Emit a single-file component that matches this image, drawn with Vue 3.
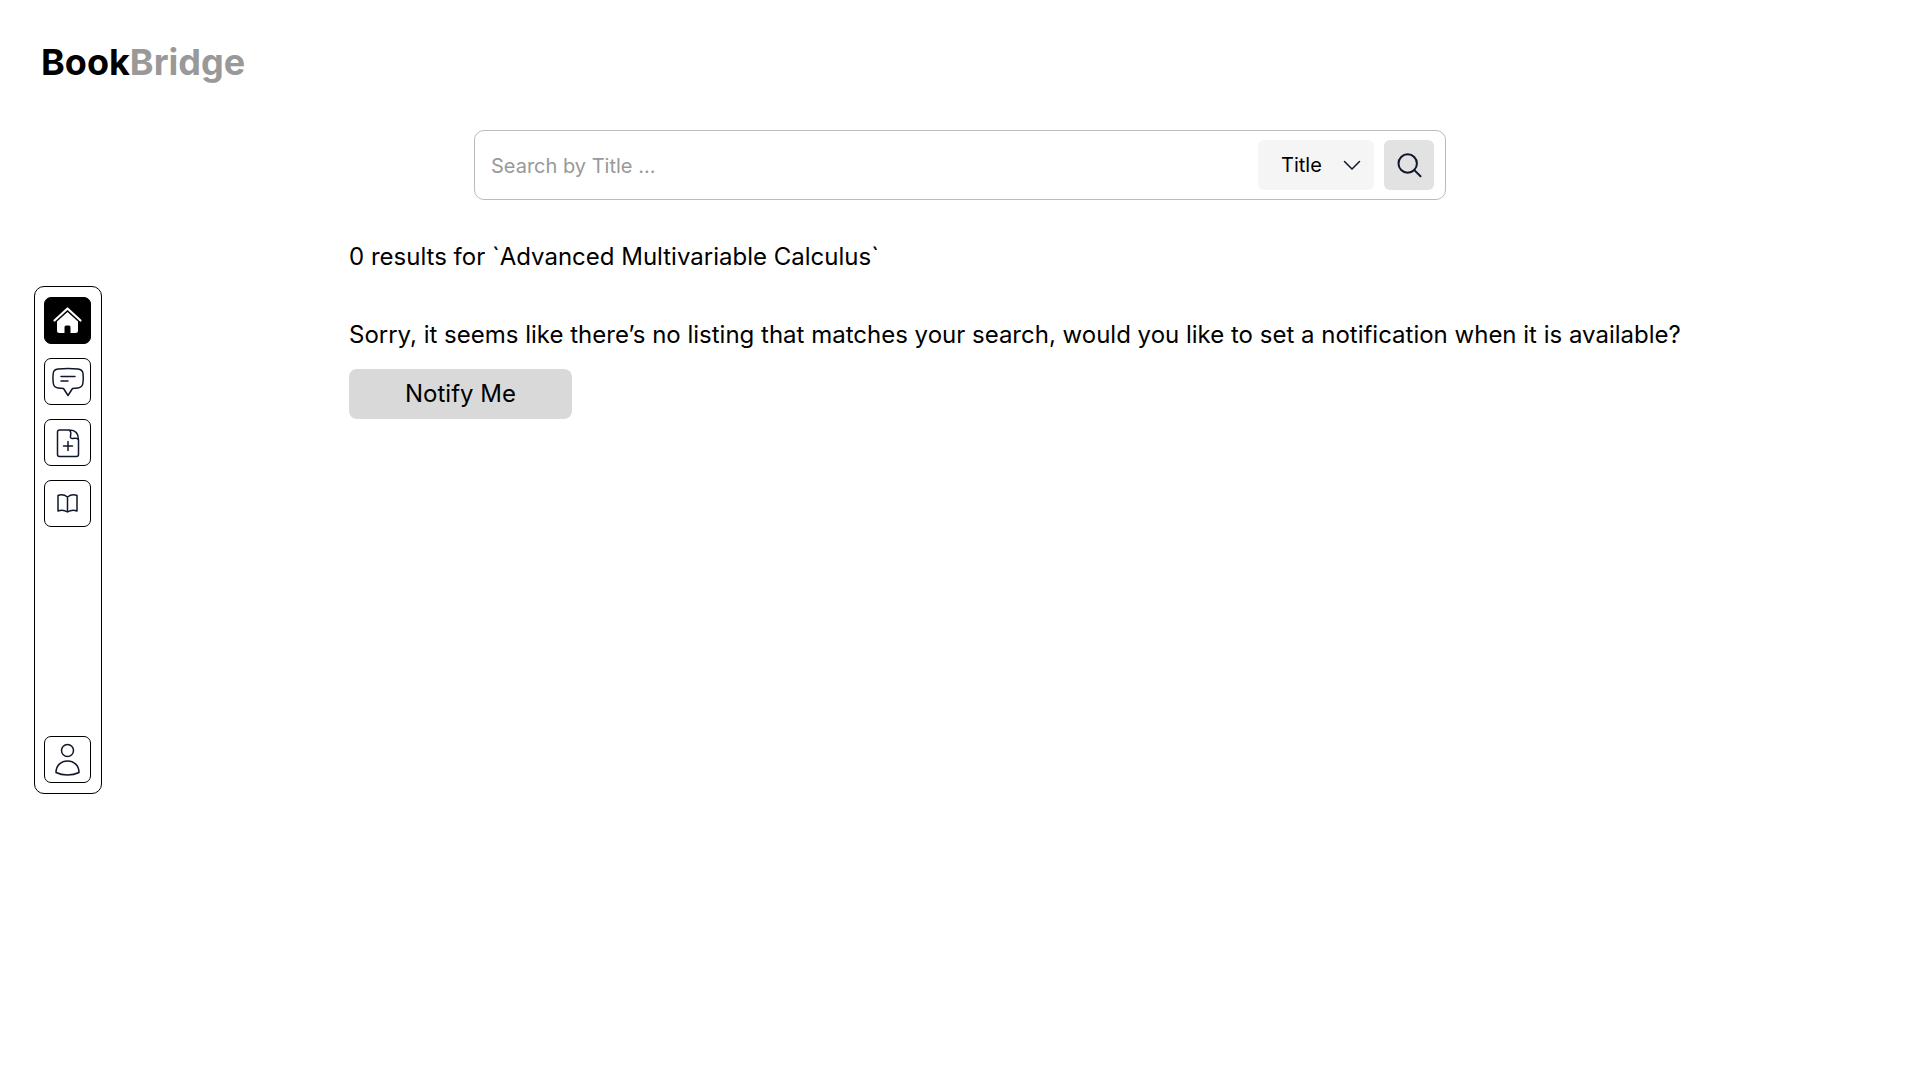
<script setup>
import { ref } from 'vue'

const query = ref('')
const field = ref('Title')
const fields = ['Title', 'Author', 'ISBN']
const searched = 'Advanced Multivariable Calculus'
</script>

<template>
  <div class="page">
    <header class="header">
      <a class="logo" href="#">Book<span class="logo-light">Bridge</span></a>
    </header>

    <nav class="sidebar" aria-label="Main">
      <button class="nav-button active" type="button" aria-label="Home">
        <svg viewBox="0 0 45 45">
          <path d="M9.5 22.5 L22.5 10.500 L35.5 22.5" fill="none" stroke="#fff" stroke-width="2.2" stroke-linecap="round" stroke-linejoin="round" />
          <path d="M22.5 14 L33 23.500 V32.500 Q33 35 30.500 35 H25.500 V29 Q25.500 27.500 24 27.500 H21 Q19.500 27.500 19.500 29 V35 H14.500 Q12 35 12 32.500 V23.500 Z" fill="#fff" />
        </svg>
      </button>
      <button class="nav-button" type="button" aria-label="Messages">
        <svg viewBox="0 0 45 45" class="line">
          <path d="M13 10 Q23 9 33 10 Q37.500 10.500 38 14.500 Q38.600 19 38 23.500 Q37.500 28.500 33 29 L27.500 29.500 L23 36.500 L18.500 29.500 L13 29 Q8.500 28.500 8.200 23.500 Q7.600 19 8.200 14.500 Q8.500 10.500 13 10 Z" />
          <path d="M16 17.500 H30 M16 22 H23" />
        </svg>
      </button>
      <button class="nav-button" type="button" aria-label="Add listing">
        <svg viewBox="0 0 45 45" class="line">
          <path d="M24.500 10 H14.500 Q12.500 10 12.500 12 V34.500 Q12.500 36.500 14.500 36.500 H31.500 Q33.500 36.500 33.500 34.500 V20 Q33.500 10 24.500 10 Q26.500 12 25.500 16 Q25 18.500 27.500 18.500 Q33 17.500 33.500 20 M23 21.500 V30.500 M18.500 26 H27.500" />
        </svg>
      </button>
      <button class="nav-button" type="button" aria-label="Library">
        <svg viewBox="0 0 45 45" class="line">
          <path d="M22.500 16 Q18 12.500 13 14.500 V30 Q18 28 22.500 31 Q27 28 32 30 V14.500 Q27 12.500 22.500 16 V31" />
        </svg>
      </button>
      <button class="nav-button profile" type="button" aria-label="Profile">
        <svg viewBox="0 0 45 45" class="line">
          <circle cx="22.500" cy="13.500" r="6" />
          <path d="M22.500 24 C29 24 34 28.500 34 35.500 Q29 38 22.500 38 Q16 38 11 35.500 C11 28.500 16 24 22.500 24 Z" />
        </svg>
      </button>
    </nav>

    <main class="content">
      <form class="search" role="search" @submit.prevent>
        <input v-model="query" class="search-input" type="text" aria-label="Search by title" placeholder="Search by Title ..." />
        <div class="field">
          <select v-model="field" class="field-select" aria-label="Search field">
            <option v-for="name in fields" :key="name">{{ name }}</option>
          </select>
          <svg class="chevron" viewBox="0 0 24 24"><path d="M4.500 8.500 L12 16 L19.500 8.500" /></svg>
        </div>
        <button class="search-button" type="submit" aria-label="Search">
          <svg viewBox="0 0 30 30"><circle cx="13.700" cy="13.500" r="9.200" /><path d="M20.300 20.100 L26.500 26.300" /></svg>
        </button>
      </form>

      <section class="results">
        <p class="line-text">0 results for <span class="quote">`</span>{{ searched }}<span class="quote">`</span></p>
        <p class="line-text message">Sorry, it seems like there’s no listing that matches your search, would you like to set a notification when it is available?</p>
        <button class="notify" type="button">Notify Me</button>
      </section>
    </main>
  </div>
</template>

<style>
body {
  margin: 0;
  background: #fff;
}
</style>

<style scoped>
.page {
  box-sizing: border-box;
  display: grid;
  grid-template-columns: 102px 1fr;
  grid-template-rows: auto 1fr;
  min-height: 100vh;
  font-family: Inter, "Liberation Sans", sans-serif;
  color: #000;
}

.page * {
  box-sizing: border-box;
}

button,
input,
select {
  margin: 0;
  font-family: inherit;
  color: inherit;
}

button,
select {
  cursor: pointer;
}

.header {
  grid-area: 1 / 1 / 2 / 3;
  padding: 40px 41px 0;
}

.logo {
  display: inline-block;
  font-size: 36px;
  font-weight: 700;
  line-height: 44px;
  color: #000;
  text-decoration: none;
}

.logo-light {
  color: #999;
}

.sidebar {
  grid-area: 1 / 1 / 3 / 2;
  align-self: center;
  z-index: 1;
  display: flex;
  flex-direction: column;
  align-items: flex-start;
  gap: 14px;
  width: 68px;
  min-height: 508px;
  margin-left: 34px;
  padding: 10px 9px;
  border: 1px solid #000;
  border-radius: 10px;
}

.nav-button {
  width: 47px;
  height: 47px;
  padding: 0;
  border: 1px solid #000;
  border-radius: 7px;
  background: #fff;
}

.nav-button svg {
  display: block;
  width: 100%;
  height: 100%;
}

.active {
  background: #000;
}

.profile {
  margin-top: auto;
}

.line {
  fill: none;
  stroke: #0f172a;
  stroke-width: 1.5;
  stroke-linecap: round;
  stroke-linejoin: round;
}

.content {
  grid-area: 2 / 1 / 3 / 3;
  padding-top: 46px;
}

.search {
  display: flex;
  align-items: center;
  gap: 10px;
  max-width: 972px;
  height: 70px;
  margin: 0 auto;
  padding: 0 11px 0 16px;
  border: 1px solid #bbb;
  border-radius: 10px;
}

.search-input {
  flex: 1;
  min-width: 0;
  height: 50px;
  padding: 2px 0 0;
  border: 0;
  outline: 0;
  background: none;
  font-size: 20px;
}

.search-input::placeholder {
  color: #999;
  opacity: 1;
}

.field {
  position: relative;
  width: 116px;
  height: 50px;
}

.field-select {
  width: 100%;
  height: 100%;
  padding: 0 40px 0 23px;
  border: 0;
  border-radius: 6px;
  appearance: none;
  background: #f5f5f5;
  font-size: 20px;
}

.chevron {
  position: absolute;
  top: 13px;
  right: 10px;
  width: 24px;
  height: 24px;
  pointer-events: none;
}

.search-button {
  display: grid;
  place-items: center;
  width: 50px;
  height: 50px;
  padding: 0;
  border: 0;
  border-radius: 6px;
  background: #e2e2e2;
}

.search-button svg {
  width: 30px;
  height: 30px;
}

.chevron,
.search-button svg {
  fill: none;
  stroke: #0f172a;
  stroke-width: 1.5;
  stroke-linecap: round;
  stroke-linejoin: round;
}

.search-button svg {
  stroke-width: 2;
}

.results {
  padding: 42px 24px 0 349px;
}

.line-text {
  margin: 0;
  font-size: 24px;
  line-height: 29px;
}

.quote {
  font-kerning: none;
}

.message {
  margin-top: 49px;
}

.notify {
  display: block;
  width: 223px;
  height: 50px;
  margin-top: 20px;
  padding: 0 0 2px;
  border: 0;
  border-radius: 8px;
  background: #d9d9d9;
  font-size: 24px;
}
</style>
